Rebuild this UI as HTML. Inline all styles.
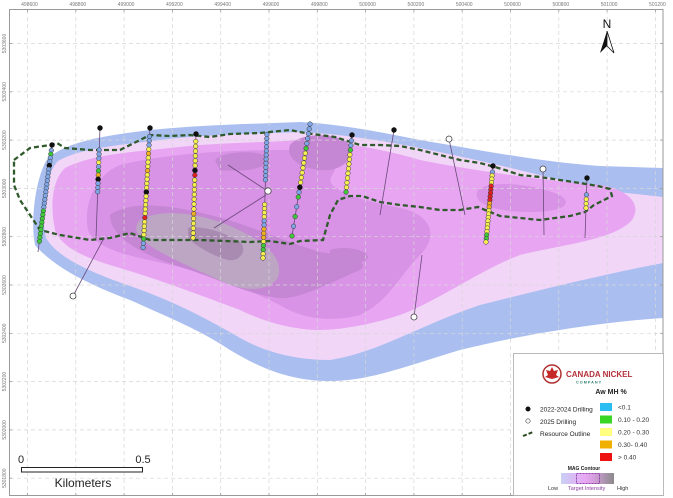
<!DOCTYPE html>
<html><head><meta charset="utf-8">
<style>
html,body{margin:0;padding:0;background:#fff;}
body{width:673px;height:498px;overflow:hidden;font-family:"Liberation Sans",sans-serif;}
svg{display:block}
</style></head>
<body>
<svg id="m" width="673" height="498" viewBox="0 0 673 498" xmlns="http://www.w3.org/2000/svg" font-family="Liberation Sans, sans-serif">
<rect width="673" height="498" fill="#fff"/>
<path fill="#aabff0" d="M35,245 C30,220 36,175 48,158 C70,140 110,135 150,130 C200,125 250,124 300,122 C340,124 380,132 420,140 C480,150 540,162 600,166 L663,168 L663,318 C600,322 520,335 460,350 C410,365 370,381 330,381 C290,381 260,368 230,350 C200,330 170,318 130,300 C90,285 55,268 35,245Z"/>
<path fill="#f2d6f8" d="M46,238 C40,210 44,176 58,161 C80,148 120,145 160,140 C210,134 250,134 300,132 C340,134 380,140 420,148 C480,160 540,175 600,190 L663,197 L663,263 C600,275 540,290 480,305 C420,325 380,352 330,360 C290,360 260,350 235,335 C200,315 170,300 130,286 C90,272 58,258 46,238Z"/>
<path fill="#e8a6f2" d="M55,230 C50,205 52,180 65,168 C90,155 130,152 170,148 C220,142 260,143 300,140 C340,142 380,148 420,160 C470,170 540,180 600,185 C630,190 642,205 632,220 C615,240 560,245 520,255 C480,270 440,300 400,315 C370,325 340,330 320,330 C290,330 260,320 240,310 C200,295 160,280 120,268 C85,258 62,248 55,230Z"/>
<path fill="#d892e6" d="M88,230 C83,205 95,175 120,165 C160,155 220,150 280,150 C320,150 345,158 332,175 C322,190 360,200 400,208 C430,214 440,235 420,255 C400,275 390,300 360,315 C330,323 300,318 280,305 C250,290 220,280 190,270 C150,258 98,255 88,230Z"/>
<path fill="#d892e6" d="M478,190 C490,180 530,183 560,195 C575,205 560,212 530,212 C500,212 470,205 478,190Z"/>
<path fill="#c586d3" d="M110,215 C130,200 170,205 210,215 C250,225 280,240 320,252 C355,258 370,262 360,270 C340,278 300,300 280,298 C250,295 220,280 190,270 C150,258 110,240 110,215Z"/>
<path fill="#c586d3" d="M290,145 C300,132 340,132 350,145 C355,160 340,172 320,170 C300,168 285,158 290,145Z"/>
<path fill="#c586d3" d="M215,160 C225,150 260,150 270,158 C268,170 240,172 220,170Z"/>
<path fill="#c586d3" d="M330,250 C345,245 368,250 368,258 C360,266 340,265 330,258Z"/>
<path fill="#bca6c4" d="M140,220 C160,208 200,213 230,226 C258,238 285,255 278,277 C270,292 245,292 223,282 C198,270 165,257 145,242 C135,234 134,226 140,220Z"/>
<path fill="#a98bb2" d="M188,228 C200,225 225,232 240,242 C248,250 240,262 228,260 C210,255 195,245 188,238Z"/>
<g stroke="#d6d6d6" stroke-width="0.7" stroke-dasharray="4,3" fill="none" id="grid"></g>
<rect x="9.5" y="9.5" width="653.5" height="486" fill="none" stroke="#999" stroke-width="1"/>
<g id="ticks" stroke="#999" stroke-width="0.8"></g>
<g id="labs" font-size="5" fill="#777"></g>
<path fill="none" stroke="#2f5a2b" stroke-width="2.3" stroke-dasharray="5,3" d="M14,160 L30,148 L50,145 L57,143 L65,148 L90,150 L120,150 L150,135 L170,136 L190,135 L210,137 L230,134 L260,133 L290,130 L305,133 L335,137 L360,145 L380,145 L400,146 L420,150 L440,155 L460,160 L480,163 L495,167 L505,170 L520,175 L540,177 L560,180 L580,183 L598,186 L610,189 L612,196 L604,200 L594,205 L585,212 L570,216 L555,218 L540,220 L520,218 L500,216 L490,212 L478,207 L460,210 L440,210 L420,207 L400,205 L380,202 L362,196 L350,196 L338,200 L330,215 L323,240 L300,241 L290,244 L270,241 L250,242 L200,240 L150,240 L130,233 L110,238 L90,240 L60,235 L40,230 L30,215 L20,200 L14,185 Z"/>
<g id="holes"></g>
<text x="607" y="28" font-size="12" text-anchor="middle" fill="#111">N</text>
<path d="M607,31 L600,53 L607,46 Z" fill="#111"/>
<path d="M607,31 L614,53 L607,46 Z" fill="#fff" stroke="#111" stroke-width="0.8"/>
<text x="21" y="463" font-size="11" text-anchor="middle" fill="#222">0</text>
<text x="143" y="463" font-size="11" text-anchor="middle" fill="#222">0.5</text>
<rect x="21.5" y="467.5" width="121" height="4.5" fill="#fff" stroke="#222" stroke-width="1"/>
<text x="83" y="487" font-size="12" text-anchor="middle" fill="#222">Kilometers</text>
<rect x="513.5" y="353.5" width="150" height="142" fill="#fff" stroke="#aaa" stroke-width="0.8"/>
<circle cx="552" cy="374" r="9" fill="#fff" stroke="#b03030" stroke-width="1.5"/>
<path d="M552,367 L554,371 L558,370 L556,375 L559,377 L552,379 L545,377 L548,375 L546,370 L550,371Z" fill="#c52a2a"/>
<text x="566" y="377" font-size="8" font-weight="bold" fill="#b5303a">CANADA NICKEL</text>
<text x="576" y="383.5" font-size="3.8" font-weight="bold" fill="#2a7a6a" letter-spacing="1">COMPANY</text>
<text x="611" y="394" font-size="7" font-weight="bold" fill="#222" text-anchor="middle">Aw MH %</text>
<circle cx="528" cy="409" r="2.5" fill="#111"/>
<text x="540" y="411.5" font-size="6.5" fill="#222">2022-2024 Drilling</text>
<circle cx="528" cy="421" r="2.2" fill="#fff" stroke="#555" stroke-width="0.7"/>
<text x="540" y="424" font-size="6.5" fill="#222">2025 Drilling</text>
<line x1="523" y1="436" x2="533" y2="432" stroke="#2a4a20" stroke-width="2" stroke-dasharray="4,2"/>
<text x="540" y="436" font-size="6.5" fill="#222">Resource Outline</text>
<rect x="600" y="403" width="12" height="8" fill="#2bbdf2"/><text x="618" y="409.5" font-size="6.5" fill="#333">&lt;0.1</text>
<rect x="600" y="415.5" width="12" height="8" fill="#3ad626"/><text x="618" y="422" font-size="6.5" fill="#333">0.10 - 0.20</text>
<rect x="600" y="428" width="12" height="8" fill="#ffff80"/><text x="618" y="434.5" font-size="6.5" fill="#333">0.20 - 0.30</text>
<rect x="600" y="440.5" width="12" height="8" fill="#f0b000"/><text x="618" y="447" font-size="6.5" fill="#333">0.30- 0.40</text>
<rect x="600" y="453" width="12" height="8" fill="#ee1111"/><text x="618" y="459.5" font-size="6.5" fill="#333">&gt; 0.40</text>
<text x="584" y="470" font-size="5" font-weight="bold" fill="#222" text-anchor="middle">MAG Contour</text>
<defs><linearGradient id="g" x1="0" x2="1"><stop offset="0" stop-color="#c8d0f4"/><stop offset="0.45" stop-color="#e8a8f4"/><stop offset="0.6" stop-color="#d8a0e0"/><stop offset="1" stop-color="#8a8a8a"/></linearGradient></defs>
<rect x="561" y="473" width="53" height="11" fill="url(#g)"/>
<rect x="576.5" y="473.5" width="23" height="10" fill="none" stroke="#7a2a9a" stroke-width="0.8" stroke-dasharray="2,1"/>
<text x="548" y="490" font-size="5.5" fill="#333">Low</text>
<text x="568" y="490" font-size="5.5" fill="#8a3aa0">Target Intensity</text>
<text x="617" y="490" font-size="5.5" fill="#333">High</text>
</svg>
<script>
var NS="http://www.w3.org/2000/svg";
function el(t,a,p){var e=document.createElementNS(NS,t);for(var k in a)e.setAttribute(k,a[k]);(p||document.getElementById('m')).appendChild(e);return e;}
var grid=document.getElementById('grid'),ticks=document.getElementById('ticks'),labs=document.getElementById('labs');
var xl=498600;
for(var i=0;i<14;i++){var x=27.5+i*48.3;el('line',{x1:x,y1:10,x2:x,y2:495},grid);el('line',{x1:x,y1:9,x2:x,y2:12},ticks);el('line',{x1:x,y1:493,x2:x,y2:496},ticks);var t=el('text',{x:x+2,y:6,'text-anchor':'middle'},labs);t.textContent=String(xl+i*200);}
var yv=5303600;
for(var j=0;j<10;j++){var y=43.5+j*48.3;el('line',{x1:10,y1:y,x2:663,y2:y},grid);el('line',{x1:9,y1:y,x2:12,y2:y},ticks);el('line',{x1:660,y1:y,x2:663,y2:y},ticks);var t2=el('text',{x:0,y:0,'text-anchor':'middle',transform:'translate(6,'+y+') rotate(-90)'},labs);t2.textContent=String(yv-j*200);}
var H=document.getElementById('holes');
var C={b:'#7fa6e6',g:'#3ec83a',y:'#f5ee50',o:'#f0b020',r:'#e02020'};
function hole(x1,y1,x2,y2,top,seq,s0,s1){
 el('line',{x1:x1,y1:y1,x2:x2,y2:y2,stroke:'#6a4a7a','stroke-width':0.8},H);
 if(seq){var n=seq.length;for(var i=0;i<n;i++){var c=seq[i];if(c=='-')continue;var f=s0+(s1-s0)*(n>1?i/(n-1):0);var cx=x1+(x2-x1)*f,cy=y1+(y2-y1)*f;
  if(c=='k')el('circle',{cx:cx,cy:cy,r:2.7,fill:'#111'},H);else el('circle',{cx:cx,cy:cy,r:2.3,fill:C[c],stroke:'#333','stroke-width':0.5},H);}}
 if(top=='k')el('circle',{cx:x1,cy:y1,r:2.7,fill:'#111'},H);
 else if(top=='w')el('circle',{cx:x1,cy:y1,r:3,fill:'#fff',stroke:'#444','stroke-width':0.8},H);
}
hole(52,145,38,252,'k','bgbbkbbbbbbbbbbbggggggggg',0.05,0.9);
hole(100,128,96,238,'k','bbbybgokbbb',0.2,0.58);
hole(150,128,143,250,'k','bbbyoyyyoyyyykyyyyyryyyygbb',0.07,0.98);
hole(196,134,193,240,'k','yyyyyykryyyyyyyoyyyyy',0.07,0.98);
hole(267,132,263,258,'','bbbbbbbbbbbb-----yyyybboooyggyy',0.02,1);
hole(310,124,292,236,'','bbbbbgyyyyyyykbg-b-g-b-g',0,1);
hole(352,135,346,192,'k','bbgyyyyyyyyg',0.1,1);
hole(394,130,380,215,'k','',0,0);
hole(449,139,465,215,'w','',0,0);
hole(493,166,486,242,'k','byyyrrrrrooyyyyyyyggy',0.08,1);
hole(543,169,544,235,'w','',0,0);
hole(587,178,585,238,'k','byyy',0.28,0.5);
hole(414,317,422,255,'w','',0,0);
hole(73,296,104,238,'w','',0,0);
el('line',{x1:228,y1:165,x2:266,y2:190,stroke:'#6a4a7a','stroke-width':0.8},H);
el('line',{x1:214,y1:228,x2:266,y2:195,stroke:'#6a4a7a','stroke-width':0.8},H);
el('circle',{cx:268,cy:191,r:3.2,fill:'#fff',stroke:'#444','stroke-width':0.8},H);
</script>
</body></html>
